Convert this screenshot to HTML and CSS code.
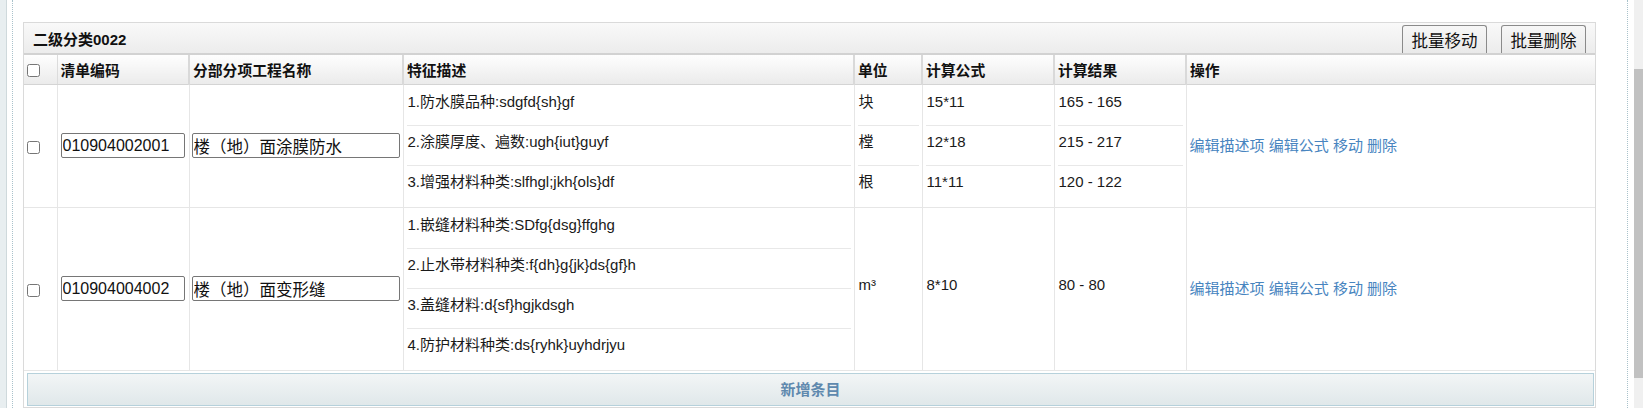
FILE: index.html
```html
<!DOCTYPE html>
<html lang="zh-CN">
<head>
<meta charset="utf-8">
<title>二级分类0022</title>
<link rel="stylesheet" href="styles.css">
</head>
<body>
<div class="page">
  <div class="strip"></div>
  <div class="guide guide-left"></div>
  <div class="content">
    <div class="panel">
      <div class="titlebar">
        <span class="title">二级分类0022</span>
        <div class="tools">
          <button class="tool-btn" type="button">批量移动</button>
          <button class="tool-btn" type="button">批量删除</button>
        </div>
      </div>
      <table class="grid">
        <colgroup>
          <col class="c-check">
          <col class="c-code">
          <col class="c-name">
          <col class="c-desc">
          <col class="c-unit">
          <col class="c-formula">
          <col class="c-result">
          <col class="c-ops">
        </colgroup>
        <thead>
          <tr>
            <th class="chk"><input type="checkbox"></th>
            <th>清单编码</th>
            <th>分部分项工程名称</th>
            <th>特征描述</th>
            <th>单位</th>
            <th>计算公式</th>
            <th>计算结果</th>
            <th>操作</th>
          </tr>
        </thead>
        <tbody>
          <tr>
            <td class="chk"><input type="checkbox"></td>
            <td class="code"><input class="field field-code" type="text" value="010904002001"></td>
            <td class="name"><input class="field field-name" type="text" value="楼（地）面涂膜防水"></td>
            <td class="multi">
              <div class="item">1.防水膜品种:sdgfd{sh}gf</div>
              <div class="item">2.涂膜厚度、遍数:ugh{iut}guyf</div>
              <div class="item">3.增强材料种类:slfhgl;jkh{ols}df</div>
            </td>
            <td class="multi">
              <div class="item">块</div>
              <div class="item">樘</div>
              <div class="item">根</div>
            </td>
            <td class="multi">
              <div class="item">15*11</div>
              <div class="item">12*18</div>
              <div class="item">11*11</div>
            </td>
            <td class="multi">
              <div class="item">165 - 165</div>
              <div class="item">215 - 217</div>
              <div class="item">120 - 122</div>
            </td>
            <td class="ops"><a href="#">编辑描述项</a> <a href="#">编辑公式</a> <a href="#">移动</a> <a href="#">删除</a></td>
          </tr>
          <tr>
            <td class="chk"><input type="checkbox"></td>
            <td class="code"><input class="field field-code" type="text" value="010904004002"></td>
            <td class="name"><input class="field field-name" type="text" value="楼（地）面变形缝"></td>
            <td class="multi">
              <div class="item">1.嵌缝材料种类:SDfg{dsg}ffghg</div>
              <div class="item">2.止水带材料种类:f{dh}g{jk}ds{gf}h</div>
              <div class="item">3.盖缝材料:d{sf}hgjkdsgh</div>
              <div class="item">4.防护材料种类:ds{ryhk}uyhdrjyu</div>
            </td>
            <td class="multi">
              <div class="item">m³</div>
            </td>
            <td class="multi">
              <div class="item">8*10</div>
            </td>
            <td class="multi">
              <div class="item">80 - 80</div>
            </td>
            <td class="ops"><a href="#">编辑描述项</a> <a href="#">编辑公式</a> <a href="#">移动</a> <a href="#">删除</a></td>
          </tr>
        </tbody>
      </table>
      <div class="addbar">新增条目</div>
    </div>
  </div>
  <div class="guide guide-right"></div>
  <div class="scrollbar"><div class="thumb"></div></div>
</div>
</body>
</html>
```
FILE: styles.css
```css
* { box-sizing: border-box; }
html, body {
  margin: 0;
  padding: 0;
  background: #fff;
  overflow: hidden;
}
body {
  font-family: "Liberation Sans", Arial, "Noto Sans CJK SC", sans-serif;
  font-size: 15px;
  color: #1a1a1a;
}
.page {
  display: flex;
  height: 408px;
  width: 1643px;
}
.strip {
  width: 7px;
  height: 100%;
  background: #e8eef0;
  border-right: 1px solid #cfd9dc;
}
.guide {
  width: 1px;
  height: 100%;
  border-left: 1px dotted #a9c2cb;
}
.guide-left { margin-left: 5px; }
.guide-right { margin-left: 31px; }
.content {
  margin-left: 10px;
  width: 1573px;
  padding-top: 22px;
}
.panel {
  border: 1px solid #dadada;
  background: #fff;
  height: 386px;
}
.titlebar {
  display: flex;
  align-items: center;
  justify-content: space-between;
  height: 32px;
  padding-left: 9px;
  padding-right: 9px;
  background: linear-gradient(#f9f9f9, #ececec);
  border-bottom: 2px solid #d2d2d2;
}
.title {
  font-weight: bold;
  font-size: 15px;
  color: #111;
}
.tools {
  display: flex;
  gap: 14px;
  align-self: flex-end;
}
.tool-btn {
  height: 28px;
  width: 85px;
  padding: 0;
  font-family: "Liberation Sans", Arial, "Noto Sans CJK SC", sans-serif;
  font-size: 16.5px;
  color: #111;
  background: linear-gradient(#f7f7f7, #e9e9e9);
  border: 1px solid #8a8a8a;
  border-bottom: none;
  border-radius: 3px 3px 0 0;
}
.grid {
  width: 1571px;
  border-collapse: collapse;
  table-layout: fixed;
}
.c-check { width: 33px; }
.c-code { width: 132px; }
.c-name { width: 214px; }
.c-desc { width: 451px; }
.c-unit { width: 68px; }
.c-formula { width: 132px; }
.c-result { width: 132px; }
.c-ops { width: 409px; }
.grid th {
  height: 29px;
  padding: 0 3px;
  text-align: left;
  font-weight: bold;
  font-size: 14.8px;
  color: #111;
  background: linear-gradient(#fefefe, #ebebeb);
  border-left: 2px solid #d9d9d9;
  border-bottom: 1px solid #d4d4d4;
}
.grid th:first-child { border-left: none; }
.grid th:nth-child(2) { border-left: 1px solid #dcdcdc; }
.grid td {
  padding: 1px 3px;
  border: 1px solid #e6e6e6;
  vertical-align: middle;
}
.grid tr td:first-child { border-left: none; }
.grid tr td:last-child { border-right: none; }
.chk input {
  margin: 0 0 0 2px;
  width: 13px;
  height: 13px;
  vertical-align: middle;
}
.grid th.chk, .grid td.chk { padding: 0 0 0 1px; }
.field {
  display: block;
  height: 25px;
  border: 1px solid #767676;
  border-radius: 2px;
  padding: 0 1px;
  font-family: "Liberation Sans", Arial, "Noto Sans CJK SC", sans-serif;
  font-size: 16.5px;
  color: #111;
  background: #fff;
}
.field-code { width: 124px; margin-left: 0; font-size: 16px; }
.field-name { width: 208px; margin-left: -1px; }
.item {
  height: 40px;
  padding: 6px 1px 0;
  line-height: 20px;
  border-bottom: 1px solid #e8e8e8;
  white-space: nowrap;
}
.item:last-child { border-bottom-color: transparent; }
.ops {
  font-size: 15px;
  line-height: 20px;
}
.ops a {
  color: #4885bf;
  text-decoration: none;
}
.addbar {
  margin: 2px 1px 0 3px;
  height: 33px;
  line-height: 31px;
  text-align: center;
  font-weight: bold;
  font-size: 15px;
  color: #5f89ae;
  background: linear-gradient(#f2f5f6, #e0e8ea);
  border: 1px solid #b6d1db;
}
.scrollbar {
  margin-left: 6px;
  width: 9px;
  height: 100%;
  background: #f0f0f0;
  padding-top: 69px;
}
.thumb {
  height: 309px;
  background: #c1c1c1;
}
```
